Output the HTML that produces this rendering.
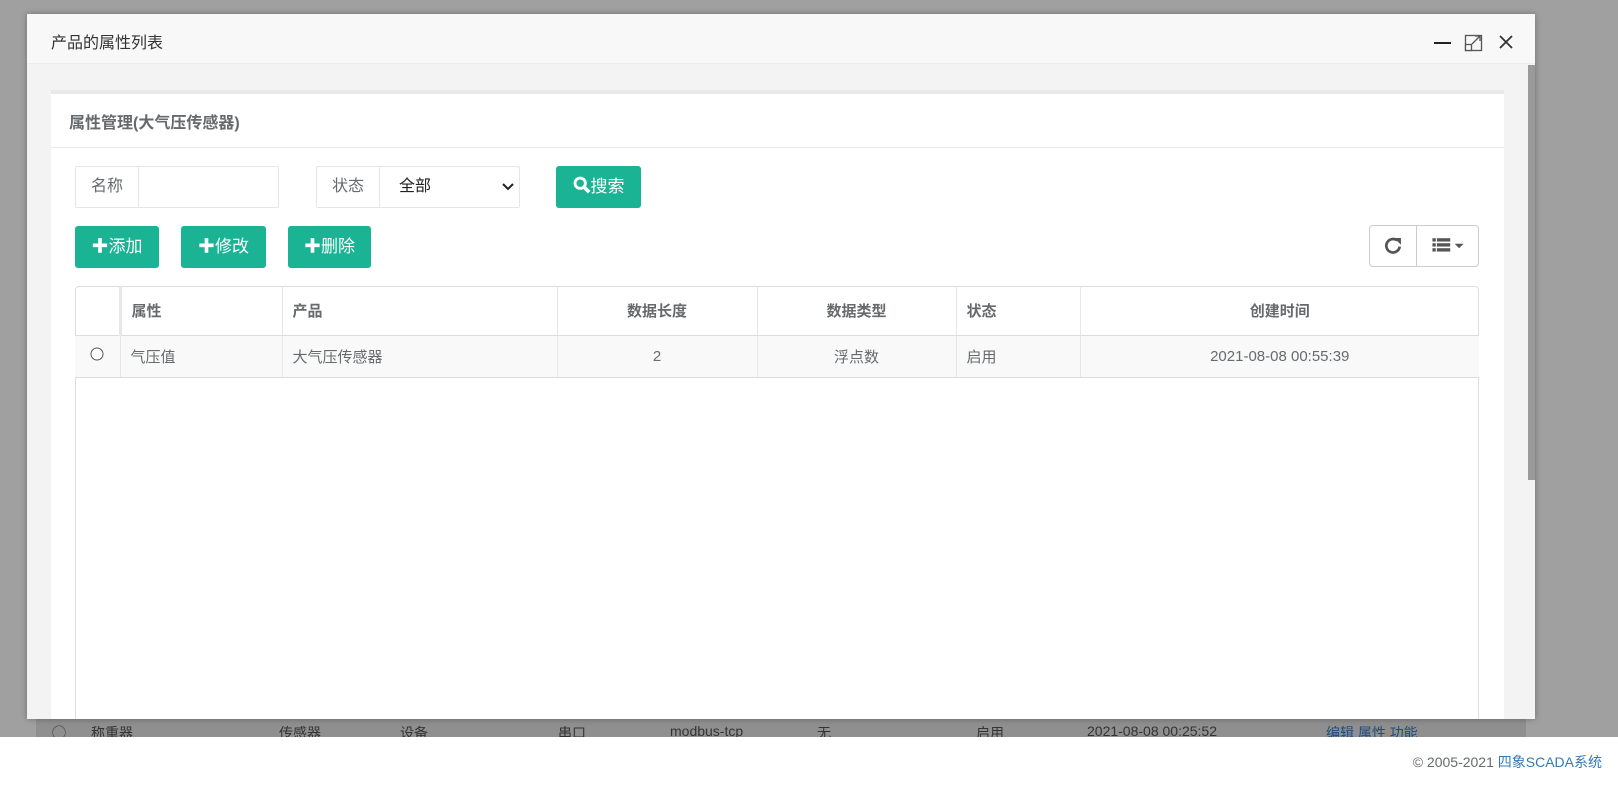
<!DOCTYPE html>
<html><head><meta charset="utf-8"><style>
*{box-sizing:border-box;margin:0;padding:0}
body{width:1618px;height:800px;position:relative;overflow:hidden;background:#fff;font-family:"Liberation Sans","Noto Sans CJK SC",sans-serif;font-size:14px;color:#676a6c}
.ov{position:absolute;left:0;top:0;width:1618px;height:737px;background:#a0a0a0}
.behind{position:absolute;top:719px;left:36px;width:1490px;height:18px;background:#8f8f8f;color:#333;font-size:14px;overflow:hidden}
.behind span{position:absolute;top:4px}
.foot{position:absolute;right:16px;top:752px;font-size:14px;color:#676a6c}
.foot a{color:#337ab7;text-decoration:none}
.dlg{position:absolute;left:27px;top:14px;width:1508px;height:705px;background:#f3f3f3;box-shadow:0 0 6px rgba(0,0,0,.3);overflow:hidden}
.tb{height:50px;background:#f8f8f8;border-bottom:1px solid #eee;position:relative}
.tb .t{position:absolute;left:24px;top:15px;font-size:16px;color:#333}
.sb{position:absolute;left:1501px;top:51px;width:7px;height:415px;background:#9a9a9a}
.panel{position:absolute;left:24px;top:76px;width:1453px;height:640px;background:#fff;border-top:4px solid #e7eaec}
.ph{height:54px;border-bottom:1px solid #e7eaec;padding:15px 18px;font-weight:bold;font-size:16px;color:#676a6c}
.ig{position:absolute;top:72px;height:42px;border:1px solid #e5e6e7;display:flex;border-radius:2px}
.ig .l{width:63px;border-right:1px solid #e5e6e7;text-align:center;line-height:40px;font-size:16px;color:#676a6c}
.btn{position:absolute;background:#1ab394;color:#fff;border-radius:3px;height:42px;line-height:42px;font-size:17px;text-align:center}
.tools{position:absolute;left:1318px;top:131px;width:110px;height:42px;border:1px solid #ccc;border-radius:4px;display:flex}
.tools div{flex:none;display:flex;align-items:center;justify-content:center}
table{position:absolute;left:24px;top:192px;width:1404px;border-collapse:collapse}
.tw{position:absolute;left:24px;top:192px;width:1404px;height:460px;border:1px solid #ddd;border-radius:4px}
td,th{border-left:1px solid #e7e7e7;font-size:15px}
th{height:49px;font-weight:bold;color:#676a6c;text-align:left;padding-left:10px;border-bottom:1px solid #ddd}
td{height:42px;background:#f9f9f9;padding-left:10px;color:#676a6c;border-bottom:1px solid #ddd}
.c{text-align:center;padding-left:0}
</style></head><body>
<div class="ov"></div>
<div class="behind">
<span style="left:16px">◯</span><span style="left:55px">称重器</span><span style="left:243px">传感器</span><span style="left:364px">设备</span><span style="left:522px">串口</span><span style="left:634px">modbus-tcp</span><span style="left:781px">无</span><span style="left:940px">启用</span><span style="left:1051px">2021-08-08 00:25:52</span><span style="left:1290px;color:#1f4c7a">编辑 属性 功能</span>
</div>
<div class="foot">© 2005-2021 <a>四象SCADA系统</a></div>
<div class="dlg">
<div class="tb"><span class="t">产品的属性列表</span>
<svg style="position:absolute;left:1405px;top:17px" width="82" height="22" viewBox="0 0 82 22"><path d="M2 12h17" stroke="#222" stroke-width="2"/><rect x="33.5" y="4.5" width="16" height="15" fill="none" stroke="#555" stroke-width="1.3"/><rect x="33.5" y="13.5" width="6" height="6" fill="#f8f8f8" stroke="#555" stroke-width="1.3"/><path d="M40 13l8-8M43 5h5v5" fill="none" stroke="#555" stroke-width="1.3"/><path d="M68 5l12 12M80 5L68 17" stroke="#333" stroke-width="1.8"/></svg>
</div>
<div class="sb"></div>
<div class="panel">
<div class="ph">属性管理(大气压传感器)</div>
<div class="ig" style="left:24px;width:204px"><div class="l">名称</div></div>
<div class="ig" style="left:265px;width:204px"><div class="l">状态</div><div style="flex:1;line-height:40px;padding-left:19px;font-size:16px;color:#222;position:relative">全部<svg style="position:absolute;right:5px;top:15px" width="12" height="10"><path d="M1 2l5 5 5-5" fill="none" stroke="#222" stroke-width="2"/></svg></div></div>
<div class="btn" style="left:505px;top:72px;width:85px"><svg width="18" height="18" viewBox="0 0 15 15" style="vertical-align:-2px"><circle cx="6" cy="6" r="4.3" fill="none" stroke="#fff" stroke-width="2.4"/><path d="M9 9l4.5 4.5" stroke="#fff" stroke-width="3"/></svg>搜索</div>
<div class="btn" style="left:24px;top:132px;width:84px"><b>✚</b>添加</div>
<div class="btn" style="left:130px;top:132px;width:85px"><b>✚</b>修改</div>
<div class="btn" style="left:237px;top:132px;width:83px"><b>✚</b>删除</div>
<div class="tools"><div style="width:47px;border-right:1px solid #ccc"><svg width="22" height="22" viewBox="0 0 18 18"><path d="M14.5 9.5A5.5 5.5 0 1 1 12.5 4.5" fill="none" stroke="#555" stroke-width="2.2"/><path d="M10 2.5h5.5v5.5z" fill="#555"/></svg></div><div style="width:62px"><svg width="36" height="20" viewBox="0 0 32 18"><g fill="#555"><rect x="2" y="2" width="3" height="3"/><rect x="2" y="6.5" width="3" height="3"/><rect x="2" y="11" width="3" height="3"/><rect x="6" y="2" width="12" height="3"/><rect x="6" y="6.5" width="12" height="3"/><rect x="6" y="11" width="12" height="3"/><path d="M22 7h8l-4 4z"/></g></svg></div></div>
<div class="tw"></div>
<table>
<tr><th style="width:45px;border-left:none"></th><th style="width:162px;border-left:3px solid #e7e7e7">属性</th><th style="width:275px">产品</th><th class="c" style="width:200px">数据长度</th><th class="c" style="width:199px">数据类型</th><th style="width:124px">状态</th><th class="c">创建时间</th></tr>
<tr><td class="c" style="border-left:none"><svg width="14" height="14"><circle cx="7" cy="7" r="6" fill="#fff" stroke="#555"/></svg></td><td>气压值</td><td>大气压传感器</td><td class="c">2</td><td class="c">浮点数</td><td>启用</td><td class="c">2021-08-08 00:55:39</td></tr>
</table>
</div>
</div>
</body></html>
